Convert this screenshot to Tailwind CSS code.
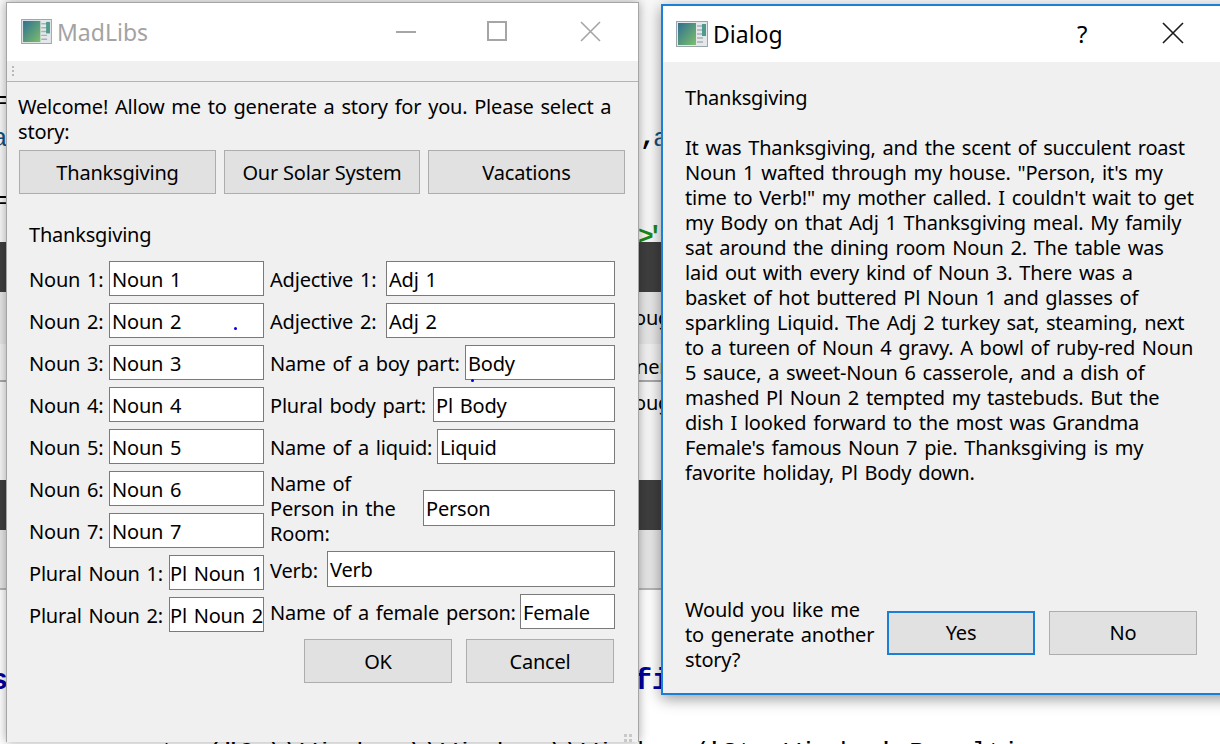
<!DOCTYPE html>
<html lang="en">
  <head>
    <meta charset="UTF-8" />
    <script src="https://cdn.jsdelivr.net/npm/@tailwindcss/browser@4"></script>
    <title>MadLibs</title>
  </head>
  <body class="m-0 p-0">
    <div class="relative w-[1220px] h-[744px] overflow-hidden bg-white font-['Noto_Sans',sans-serif] text-[20px] leading-[25px] tracking-[-0.2px] [word-spacing:1.85px] text-black">
      <!-- editor behind the windows -->
      <div class="flex flex-col w-full h-full">
        <div class="h-[242px] bg-[#f8f8f8]"></div>
        <div class="h-[50px] bg-[#3f3f3f]"></div>
        <div class="h-[52px] bg-[#e6e6e6]"></div>
        <div class="h-[38px] bg-[#f1f1f1] border-b-2 border-[#a8a8a8]"></div>
        <div class="h-[98px] bg-[#f7f7f7]"></div>
        <div class="h-[50px] bg-[#3f3f3f]"></div>
        <div class="h-[60px] bg-[#e6e6e6] border-b-2 border-[#b5b5b5]"></div>
        <div class="flex-1 bg-white"></div>
      </div>
      <span class="absolute left-[640px] top-[122px] font-['Liberation_Mono',monospace] text-[26px] leading-[30px] font-bold">,</span>
      <span class="absolute left-[653px] top-[124px] font-['Liberation_Mono',monospace] text-[26px] leading-[30px] text-[#14507a]">a</span>
      <span class="absolute left-[638px] top-[222px] font-['Liberation_Mono',monospace] text-[26px] leading-[30px] font-bold tracking-[-6px] text-[#1a8a1a]">&gt;'</span>
      <span class="absolute left-[634px] top-[305px]">ough</span>
      <span class="absolute left-[636px] top-[354px]">ner</span>
      <span class="absolute left-[634px] top-[390px]">ough</span>
      <span class="absolute left-[634px] top-[663px] font-['Liberation_Mono',monospace] text-[30px] leading-[36px] font-bold text-[#0000a0]">fi</span>
      <span class="absolute left-[-10px] top-[663px] font-['Liberation_Mono',monospace] text-[30px] leading-[36px] font-bold text-[#0000a0]">s</span>
      <span class="absolute left-[-8px] top-[86px] font-['Liberation_Mono',monospace] text-[26px] leading-[30px]">=</span>
      <span class="absolute left-[-8px] top-[186px] font-['Liberation_Mono',monospace] text-[26px] leading-[30px]">=</span>
      <span class="absolute left-[-8px] top-[124px] font-['Liberation_Mono',monospace] text-[26px] leading-[30px] text-[#14507a]">a</span>
      <span class="absolute left-[20px] top-[738px] font-['Liberation_Mono',monospace] text-[26px] leading-[30px] tracking-normal [word-spacing:0] whitespace-pre">   os.system("C:\\Windows\\Windows\\Windows/'Sta Window' Resulting</span>

      <!-- MadLibs window -->
      <div class="absolute left-[6px] top-[2px] w-[633px] h-[740px] bg-[#f0f0f0] border-x border-t border-[#a5a5a5] shadow-[0_0_10px_rgba(0,0,0,0.35)]">
        <div class="flex items-center h-[58px] bg-white pl-[14px]">
          <svg class="mb-[2px]" width="31" height="25" viewBox="0 0 32 26">
            <defs>
              <linearGradient id="paneA" x1="0" y1="0" x2="1" y2="1">
                <stop offset="0" stop-color="#2f6f92" />
                <stop offset="1" stop-color="#7dbf6a" />
              </linearGradient>
            </defs>
            <rect x="0.5" y="0.5" width="31" height="25" fill="#e4e8ea" stroke="#9aa4aa" />
            <rect x="2" y="2" width="18" height="22" fill="url(#paneA)" />
            <path d="M21 5h6M21 9h6M21 13h6M21 17h6M21 21h6" stroke="#a8b0b4" stroke-width="1.5" />
            <rect x="26" y="3" width="4" height="12" fill="#4f9a8c" />
          </svg>
          <span class="ml-[5px] text-[23px] tracking-normal text-[#a3a3a3]">MadLibs</span>
          <svg class="absolute left-[389px] top-[18px]" width="21" height="21" viewBox="0 0 21 21">
            <path d="M0 11h20" stroke="#a5a5a5" stroke-width="2" fill="none" />
          </svg>
          <svg class="absolute left-[480px] top-[18px]" width="21" height="21" viewBox="0 0 21 21">
            <rect x="1" y="1" width="18" height="18" stroke="#a5a5a5" stroke-width="2" fill="none" />
          </svg>
          <svg class="absolute left-[573px] top-[18px]" width="21" height="21" viewBox="0 0 21 21">
            <path d="M1 1l19 19M20 1L1 20" stroke="#a5a5a5" stroke-width="1.6" fill="none" />
          </svg>
        </div>
        <div class="flex items-center h-[21px] border-b border-[#b4b4b4] pl-[5px]">
          <div class="flex flex-col gap-[2px]">
            <div class="w-[2px] h-[2px] bg-[#b9b9b9]"></div>
            <div class="w-[2px] h-[2px] bg-[#b9b9b9]"></div>
            <div class="w-[2px] h-[2px] bg-[#b9b9b9]"></div>
          </div>
        </div>

        <div class="pl-[11px] pr-[13px] pt-[12px]">
          <div class="w-[600px]">Welcome! Allow me to generate a story for you. Please select a story:</div>
          <div class="flex gap-[8px] mt-[6px] ml-[1px]">
            <button class="w-[197px] h-[44px] bg-[#e1e1e1] border border-[#adadad]">Thanksgiving</button>
            <button class="w-[196px] h-[44px] bg-[#e1e1e1] border border-[#adadad]">Our Solar System</button>
            <button class="w-[197px] h-[44px] bg-[#e1e1e1] border border-[#adadad]">Vacations</button>
          </div>
        </div>

        <div class="pl-[22px] pt-[28px]">
          <div>Thanksgiving</div>
          <div class="flex gap-[6px] mt-[14px]">
            <div class="flex flex-col gap-[7px] w-[235px]">
              <div class="flex items-center justify-between h-[35px]"><span class="mt-[2px]">Noun 1:</span><div class="w-[155px] h-[35px] bg-white border border-[#7a7a7a] pl-[2px] leading-[35px]">Noun 1</div></div>
              <div class="flex items-center justify-between h-[35px]"><span class="mt-[2px]">Noun 2:</span><div class="w-[155px] h-[35px] bg-white border border-[#7a7a7a] pl-[2px] leading-[35px]">Noun 2</div></div>
              <div class="flex items-center justify-between h-[35px]"><span class="mt-[2px]">Noun 3:</span><div class="w-[155px] h-[35px] bg-white border border-[#7a7a7a] pl-[2px] leading-[35px]">Noun 3</div></div>
              <div class="flex items-center justify-between h-[35px]"><span class="mt-[2px]">Noun 4:</span><div class="w-[155px] h-[35px] bg-white border border-[#7a7a7a] pl-[2px] leading-[35px]">Noun 4</div></div>
              <div class="flex items-center justify-between h-[35px]"><span class="mt-[2px]">Noun 5:</span><div class="w-[155px] h-[35px] bg-white border border-[#7a7a7a] pl-[2px] leading-[35px]">Noun 5</div></div>
              <div class="flex items-center justify-between h-[35px]"><span class="mt-[2px]">Noun 6:</span><div class="w-[155px] h-[35px] bg-white border border-[#7a7a7a] pl-[2px] leading-[35px]">Noun 6</div></div>
              <div class="flex items-center justify-between h-[35px]"><span class="mt-[2px]">Noun 7:</span><div class="w-[155px] h-[35px] bg-white border border-[#7a7a7a] pl-[2px] leading-[35px]">Noun 7</div></div>
              <div class="flex items-center justify-between h-[35px]"><span class="mt-[2px]">Plural Noun 1:</span><div class="w-[95px] h-[35px] bg-white border border-[#7a7a7a] leading-[35px] whitespace-nowrap">Pl Noun 1</div></div>
              <div class="flex items-center justify-between h-[35px]"><span class="mt-[2px]">Plural Noun 2:</span><div class="w-[95px] h-[35px] bg-white border border-[#7a7a7a] leading-[35px] whitespace-nowrap">Pl Noun 2</div></div>
            </div>
            <div class="flex flex-col gap-[7px] w-[345px]">
              <div class="flex items-center h-[35px]"><span class="w-[116px] mt-[2px] whitespace-nowrap">Adjective 1:</span><div class="flex-1 h-[35px] bg-white border border-[#7a7a7a] pl-[2px] leading-[35px]">Adj 1</div></div>
              <div class="flex items-center h-[35px]"><span class="w-[116px] mt-[2px] whitespace-nowrap">Adjective 2:</span><div class="flex-1 h-[35px] bg-white border border-[#7a7a7a] pl-[2px] leading-[35px]">Adj 2</div></div>
              <div class="flex items-center h-[35px]"><span class="w-[195px] mt-[2px] whitespace-nowrap">Name of a boy part:</span><div class="flex-1 h-[35px] bg-white border border-[#7a7a7a] pl-[2px] leading-[35px]">Body</div></div>
              <div class="flex items-center h-[35px]"><span class="w-[163px] mt-[2px] whitespace-nowrap">Plural body part:</span><div class="flex-1 h-[35px] bg-white border border-[#7a7a7a] pl-[2px] leading-[35px]">Pl Body</div></div>
              <div class="flex items-center h-[35px]"><span class="w-[167px] mt-[2px] whitespace-nowrap">Name of a liquid:</span><div class="flex-1 h-[35px] bg-white border border-[#7a7a7a] pl-[2px] leading-[35px]">Liquid</div></div>
              <div class="flex items-center h-[80px] -mt-[3px]"><span class="w-[153px]">Name of<br />Person in the<br />Room:</span><div class="flex-1 h-[36px] bg-white border border-[#7a7a7a] pl-[2px] leading-[36px]">Person</div></div>
              <div class="flex items-center h-[36px] -mt-[4px]"><span class="w-[57px] mt-[2px] whitespace-nowrap">Verb:</span><div class="flex-1 h-[36px] bg-white border border-[#7a7a7a] pl-[2px] leading-[36px]">Verb</div></div>
              <div class="flex items-center h-[35px]"><span class="w-[250px] mt-[2px] whitespace-nowrap">Name of a female person:</span><div class="flex-1 h-[35px] bg-white border border-[#7a7a7a] pl-[2px] leading-[35px]">Female</div></div>
            </div>
          </div>
          <div class="flex justify-end gap-[14px] w-[585px] mt-[7px]">
            <button class="w-[148px] h-[44px] bg-[#e1e1e1] border border-[#adadad]">OK</button>
            <button class="w-[148px] h-[44px] bg-[#e1e1e1] border border-[#adadad]">Cancel</button>
          </div>
        </div>

        <div class="absolute left-[227px] top-[324px] w-[3px] h-[3px] rounded-full bg-[#0000e0]"></div>
        <div class="absolute left-[464px] top-[376px] w-[3px] h-[3px] rounded-full bg-[#0000e0]"></div>
        <div class="absolute left-[617px] top-[731px] grid grid-cols-2 gap-[2px]">
          <div class="w-[3px] h-[3px] bg-[#c8c8c8]"></div>
          <div class="w-[3px] h-[3px] bg-[#c8c8c8]"></div>
          <div class="w-[3px] h-[3px] bg-[#c8c8c8]"></div>
          <div class="w-[3px] h-[3px] bg-[#c8c8c8]"></div>
        </div>
      </div>

      <!-- Dialog window -->
      <div class="absolute left-[661px] top-[4px] w-[600px] h-[691px] bg-[#f0f0f0] border-2 border-[#1b7fd6] shadow-[0_4px_14px_rgba(0,0,0,0.4)]">
        <div class="flex items-center h-[56px] bg-white pl-[13px]">
          <svg width="32" height="26" viewBox="0 0 32 26">
            <defs>
              <linearGradient id="paneB" x1="0" y1="0" x2="1" y2="1">
                <stop offset="0" stop-color="#2f6f92" />
                <stop offset="1" stop-color="#7dbf6a" />
              </linearGradient>
            </defs>
            <rect x="0.5" y="0.5" width="31" height="25" fill="#e4e8ea" stroke="#9aa4aa" />
            <rect x="2" y="2" width="18" height="22" fill="url(#paneB)" />
            <path d="M21 5h6M21 9h6M21 13h6M21 17h6M21 21h6" stroke="#a8b0b4" stroke-width="1.5" />
            <rect x="26" y="3" width="4" height="12" fill="#4f9a8c" />
          </svg>
          <span class="ml-[5px] text-[23px] tracking-normal">Dialog</span>
          <span class="absolute left-[414px] top-[11px] text-[24px] leading-[34px]">?</span>
          <svg class="absolute left-[499px] top-[16px]" width="22" height="22" viewBox="0 0 22 22">
            <path d="M1 1l20 20M21 1L1 21" stroke="#1a1a1a" stroke-width="1.6" fill="none" />
          </svg>
        </div>
        <div class="pl-[22px] pt-[23px]">
          <div>Thanksgiving</div>
          <div class="mt-[25px] whitespace-nowrap">It was Thanksgiving, and the scent of succulent roast<br />Noun 1 wafted through my house. "Person, it's my<br />time to Verb!" my mother called. I couldn't wait to get<br />my Body on that Adj 1 Thanksgiving meal. My family<br />sat around the dining room Noun 2. The table was<br />laid out with every kind of Noun 3. There was a<br />basket of hot buttered Pl Noun 1 and glasses of<br />sparkling Liquid. The Adj 2 turkey sat, steaming, next<br />to a tureen of Noun 4 gravy. A bowl of ruby-red Noun<br />5 sauce, a sweet-Noun 6 casserole, and a dish of<br />mashed Pl Noun 2 tempted my tastebuds. But the<br />dish I looked forward to the most was Grandma<br />Female's famous Noun 7 pie. Thanksgiving is my<br />favorite holiday, Pl Body down.</div>
          <div class="flex items-center gap-[14px] mt-[112px]">
            <div class="w-[188px] whitespace-nowrap">Would you like me<br />to generate another<br />story?</div>
            <button class="w-[148px] h-[44px] mb-[4px] bg-[#e1e1e1] border-2 border-[#1b7fd6]">Yes</button>
            <button class="w-[148px] h-[44px] mb-[4px] bg-[#e1e1e1] border border-[#adadad]">No</button>
          </div>
        </div>
      </div>
    </div>
  </body>
</html>
